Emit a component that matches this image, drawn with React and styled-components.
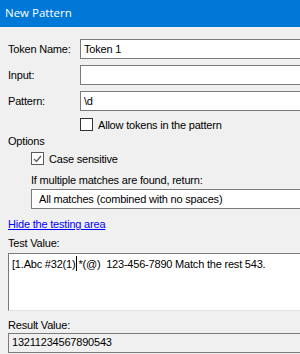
import React from "react"
import styled, { createGlobalStyle } from "styled-components"

const Global = createGlobalStyle`
  html, body {
    margin: 0;
    padding: 0;
    background: #f0f0f0;
    overflow: hidden;
  }
  body {
    font-family: "Liberation Sans", Arial, sans-serif;
    font-size: 11px;
    letter-spacing: -0.2px;
    color: #000;
  }
`

const Window = styled.div`
  width: 340px;
  height: 354px;
  background: #f0f0f0;
  overflow: hidden;
`

const TitleBar = styled.div`
  box-sizing: border-box;
  height: 27px;
  background: #0078d7;
  color: #fff;
  display: flex;
  align-items: center;
  padding: 0 0 2px 5px;
  font-family: "Open Sans", "Noto Sans", sans-serif;
  font-size: 11.5px;
  letter-spacing: 0;
`

const Body = styled.div`
  padding: 12px 0 0 8px;
  display: flex;
  flex-direction: column;
`

const FieldRow = styled.div`
  display: grid;
  grid-template-columns: 72px 1fr;
  align-items: center;
  margin-bottom: 6px;
`

const Label = styled.label`
  line-height: 13px;
  display: block;
  margin-top: ${(p) => p.$top || 0}px;
  padding-left: ${(p) => p.$indent || 0}px;
`

const TextBox = styled.div`
  box-sizing: border-box;
  height: 20px;
  border: 1px solid #7a7a7a;
  background: ${(p) => (p.$readOnly ? "#f0f0f0" : "#fff")};
  padding: 0 0 ${(p) => (p.$readOnly ? 2 : 0)}px ${(p) => p.$pad || 3}px;
  display: flex;
  align-items: center;
  white-space: nowrap;
  margin-top: ${(p) => p.$top || 0}px;
  margin-left: ${(p) => p.$indent || 0}px;
`

const CheckRow = styled.div`
  display: flex;
  align-items: center;
  gap: 5px;
  height: 13px;
  margin-top: ${(p) => p.$top || 0}px;
  padding-left: ${(p) => p.$indent || 0}px;
`

const Box = styled.span`
  box-sizing: border-box;
  width: 13px;
  height: 13px;
  border: 1px solid ${(p) => (p.$checked ? "#5c5c5c" : "#333")};
  background: #fff;
  display: flex;
  align-items: center;
  justify-content: center;
`

const Link = styled.a`
  color: #0000ff;
  text-decoration: underline;
  line-height: 13px;
  margin-top: 9px;
  cursor: pointer;
`

const TextArea = styled.div`
  box-sizing: border-box;
  height: 58px;
  margin-top: 3px;
  border: 1px solid #7a7a7a;
  border-bottom-color: #e3e3e3;
  background: #fff;
  padding: 2px 3px;
  white-space: nowrap;
  line-height: 13px;
`

const Caret = styled.span`
  display: inline-block;
  width: 1px;
  height: 15px;
  background: #000;
  vertical-align: -3px;
  margin: 0 1px;
`

function Checkbox({ checked, label, top, indent }) {
  return (
    <CheckRow $top={top} $indent={indent}>
      <Box $checked={checked}>
        {checked && (
          <svg width="9" height="8" viewBox="0 0 9 8">
            <path d="M1 4 L3.5 6.5 L8 1" fill="none" stroke="#5c5c5c" strokeWidth="1.3" />
          </svg>
        )}
      </Box>
      <span>{label}</span>
    </CheckRow>
  )
}

export default function App() {
  return (
    <>
      <Global />
      <Window>
        <TitleBar>New Pattern</TitleBar>
        <Body>
          <FieldRow>
            <Label>Token Name:</Label>
            <TextBox>Token 1</TextBox>
          </FieldRow>
          <FieldRow>
            <Label>Input:</Label>
            <TextBox />
          </FieldRow>
          <FieldRow>
            <Label>Pattern:</Label>
            <TextBox>\d</TextBox>
          </FieldRow>
          <Checkbox label="Allow tokens in the pattern" top={1} indent={72} />
          <Label $top={4}>Options</Label>
          <Checkbox checked label="Case sensitive" top={4} indent={23} />
          <Label $top={9} $indent={23}>If multiple matches are found, return:</Label>
          <TextBox $top={2} $indent={23} $pad={7}>All matches (combined with no spaces)</TextBox>
          <Link>Hide the testing area</Link>
          <Label $top={6}>Test Value:</Label>
          <TextArea>
            [1.Abc #32(1)<Caret />*(@)&nbsp; 123-456-7890 Match the rest 543.
          </TextArea>
          <Label $top={8}>Result Value:</Label>
          <TextBox $readOnly $top={1}>13211234567890543</TextBox>
        </Body>
      </Window>
    </>
  )
}
